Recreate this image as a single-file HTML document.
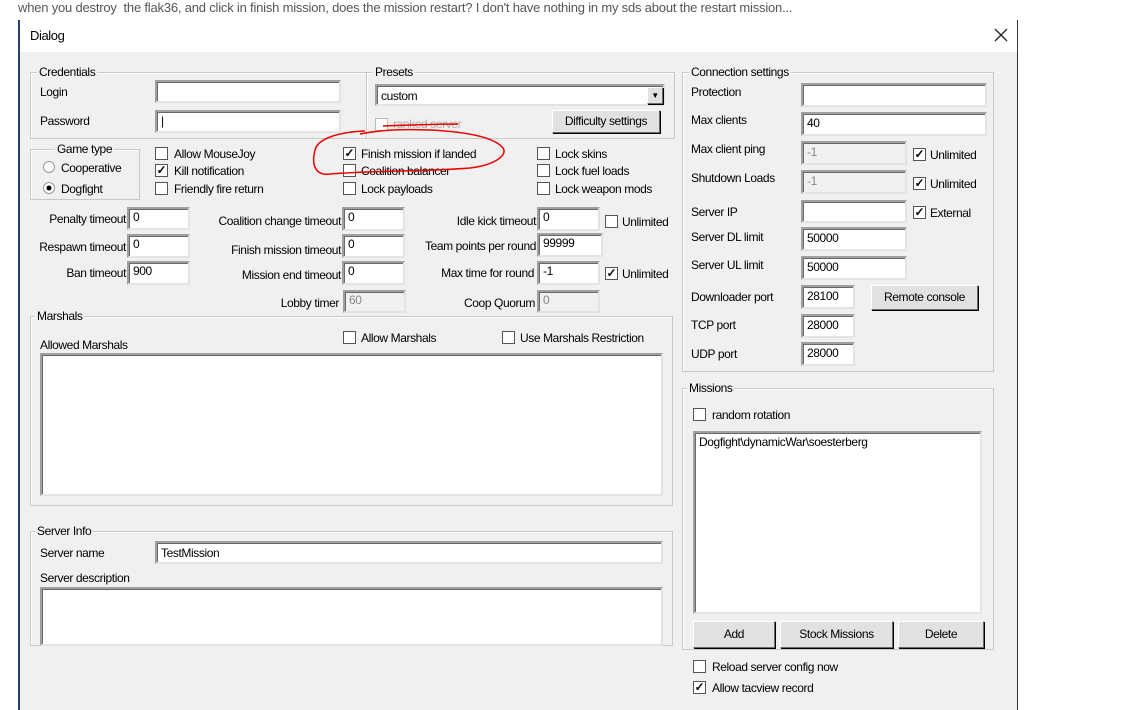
<!DOCTYPE html>
<html><head><meta charset="utf-8"><style>
*{box-sizing:border-box;margin:0;padding:0}
body{width:1122px;height:705px;background:#fff;position:relative;overflow:hidden;font-family:"Liberation Sans",sans-serif;font-size:12px;color:#000}
.a{position:absolute;white-space:nowrap;letter-spacing:-0.4px}
.dlg{position:absolute;left:18px;top:20px;width:1000px;height:690px;background:#f0f0f0;border-left:2px solid #2b3e6b;border-right:1px solid #333}
.title{position:absolute;left:0;top:0;width:100%;height:32px;background:#fff}
.in{position:absolute;background:#fff;border:2px solid;border-color:#a0a0a0 #e3e3e3 #e3e3e3 #a0a0a0;box-shadow:inset 1px 1px 0 #696969;padding:2px 4px;font-size:12px;letter-spacing:-0.4px}
.in.d{background:#f0f0f0;color:#888}
.g{position:absolute;border:1px solid #c8c8c8;box-shadow:1px 1px 0 #fff inset}
.g>span{position:absolute;top:-8px;left:6px;background:#f0f0f0;padding:0 2px;letter-spacing:-0.4px;white-space:nowrap}
.cb{position:absolute;width:13px;height:13px;background:#fff;border:1px solid #555;font-size:12px;line-height:11px;text-align:center;font-weight:bold}
.btn{position:absolute;background:#e1e1e1;border:1px solid;border-color:#fff #696969 #696969 #fff;box-shadow:1px 1px 0 #000;text-align:center;letter-spacing:-0.4px}
.r{position:absolute;width:12px;height:12px;border-radius:50%;background:#fff;border:1px solid #999}
</style></head><body>
<div class="a" style="left:18px;top:0px;font-size:13px;color:#555;letter-spacing:-0.2px">when you destroy &nbsp;the flak36, and click in finish mission, does the mission restart? I don't have nothing in my sds about the restart mission...</div>
<div class="dlg">
<div class="title"></div>
<div class="a" style="left:10px;top:8px;font-size:13px">Dialog</div>
<svg style="position:absolute;left:974px;top:8px" width="14" height="14"><path d="M1 1L13 13M13 1L1 13" stroke="#222" stroke-width="1.3"/></svg>
</div>

<div class="g" style="left:30px;top:72px;width:338px;height:67px"><span>Credentials</span></div>
<div class="a" style="left:40px;top:85px">Login</div>
<div class="in" style="left:155px;top:80px;width:186px;height:23px"></div>
<div class="a" style="left:40px;top:114px">Password</div>
<div class="in" style="left:155px;top:110px;width:186px;height:23px">|</div>

<div class="g" style="left:366px;top:72px;width:309px;height:67px"><span>Presets</span></div>
<div class="in" style="left:375px;top:84px;width:290px;height:22px;padding-top:3px">custom</div>
<div class="btn" style="left:647px;top:87px;width:16px;height:17px;font-size:8px;line-height:15px">▼</div>
<div class="cb" style="left:375px;top:118px;border-color:#bbb"></div>
<div class="a" style="left:393px;top:117px;color:#aaa">ranked server</div>
<div class="btn" style="left:552px;top:110px;width:108px;height:23px;line-height:21px">Difficulty settings</div>

<div class="g" style="left:682px;top:72px;width:312px;height:300px"><span>Connection settings</span></div>
<div class="a" style="left:691px;top:85px">Protection</div>
<div class="in" style="left:801px;top:83px;width:186px;height:24px"></div>
<div class="a" style="left:691px;top:113px">Max clients</div>
<div class="in" style="left:801px;top:112px;width:186px;height:24px">40</div>
<div class="a" style="left:691px;top:142px">Max client ping</div>
<div class="in d" style="left:801px;top:141px;width:106px;height:24px">-1</div>
<div class="a" style="left:691px;top:171px">Shutdown Loads</div>
<div class="in d" style="left:801px;top:170px;width:106px;height:24px">-1</div>
<div class="cb" style="left:913px;top:148px">✓</div><div class="a" style="left:930px;top:148px">Unlimited</div>
<div class="cb" style="left:913px;top:177px">✓</div><div class="a" style="left:930px;top:177px">Unlimited</div>
<div class="a" style="left:691px;top:205px">Server IP</div>
<div class="in" style="left:801px;top:200px;width:106px;height:23px"></div>
<div class="cb" style="left:913px;top:206px">✓</div><div class="a" style="left:930px;top:206px">External</div>
<div class="a" style="left:691px;top:230px">Server DL limit</div>
<div class="in" style="left:801px;top:227px;width:106px;height:24px">50000</div>
<div class="a" style="left:691px;top:258px">Server UL limit</div>
<div class="in" style="left:801px;top:256px;width:106px;height:24px">50000</div>
<div class="a" style="left:691px;top:290px">Downloader port</div>
<div class="in" style="left:801px;top:285px;width:54px;height:24px">28100</div>
<div class="btn" style="left:871px;top:285px;width:107px;height:25px;line-height:23px">Remote console</div>
<div class="a" style="left:691px;top:318px">TCP port</div>
<div class="in" style="left:801px;top:314px;width:54px;height:24px">28000</div>
<div class="a" style="left:691px;top:347px">UDP port</div>
<div class="in" style="left:801px;top:342px;width:54px;height:24px">28000</div>

<div class="g" style="left:30px;top:149px;width:110px;height:51px"><span style="left:24px">Game type</span></div>
<div class="r" style="left:43px;top:161px"></div><div class="a" style="left:61px;top:161px">Cooperative</div>
<div class="r" style="left:43px;top:182px;background:radial-gradient(#000 30%,#fff 40%)"></div><div class="a" style="left:61px;top:182px">Dogfight</div>

<div class="cb" style="left:155px;top:147px"></div><div class="a" style="left:174px;top:147px">Allow MouseJoy</div>
<div class="cb" style="left:155px;top:164px">✓</div><div class="a" style="left:174px;top:164px">Kill notification</div>
<div class="cb" style="left:155px;top:182px"></div><div class="a" style="left:174px;top:182px">Friendly fire return</div>
<div class="cb" style="left:343px;top:147px">✓</div><div class="a" style="left:361px;top:147px">Finish mission if landed</div>
<div class="cb" style="left:343px;top:164px"></div><div class="a" style="left:361px;top:164px">Coalition balancer</div>
<div class="cb" style="left:343px;top:182px"></div><div class="a" style="left:361px;top:182px">Lock payloads</div>
<div class="cb" style="left:537px;top:147px"></div><div class="a" style="left:555px;top:147px">Lock skins</div>
<div class="cb" style="left:537px;top:164px"></div><div class="a" style="left:555px;top:164px">Lock fuel loads</div>
<div class="cb" style="left:537px;top:182px"></div><div class="a" style="left:555px;top:182px">Lock weapon mods</div>

<div class="a" style="right:996px;top:212px">Penalty timeout</div>
<div class="in" style="left:127px;top:207px;width:63px;height:23px;padding-top:1px">0</div>
<div class="a" style="right:996px;top:240px">Respawn timeout</div>
<div class="in" style="left:127px;top:234px;width:63px;height:24px;padding-top:1px">0</div>
<div class="a" style="right:996px;top:266px">Ban timeout</div>
<div class="in" style="left:127px;top:261px;width:63px;height:24px;padding-top:1px">900</div>
<div class="a" style="right:781px;top:214px">Coalition change timeout</div>
<div class="in" style="left:342px;top:207px;width:63px;height:24px;padding-top:1px">0</div>
<div class="a" style="right:781px;top:243px">Finish mission timeout</div>
<div class="in" style="left:342px;top:234px;width:63px;height:24px;padding-top:1px">0</div>
<div class="a" style="right:781px;top:268px">Mission end timeout</div>
<div class="in" style="left:342px;top:261px;width:63px;height:24px;padding-top:1px">0</div>
<div class="a" style="right:783px;top:296px">Lobby timer</div>
<div class="in d" style="left:343px;top:290px;width:63px;height:23px;padding-top:1px">60</div>
<div class="a" style="right:586px;top:214px">Idle kick timeout</div>
<div class="in" style="left:537px;top:207px;width:63px;height:24px;padding-top:1px">0</div>
<div class="cb" style="left:605px;top:215px"></div><div class="a" style="left:622px;top:215px">Unlimited</div>
<div class="a" style="right:586px;top:239px">Team points per round</div>
<div class="in" style="left:537px;top:233px;width:66px;height:24px;padding-top:1px">99999</div>
<div class="a" style="right:588px;top:266px">Max time for round</div>
<div class="in" style="left:537px;top:261px;width:63px;height:24px;padding-top:1px">-1</div>
<div class="cb" style="left:605px;top:267px">✓</div><div class="a" style="left:622px;top:267px">Unlimited</div>
<div class="a" style="right:587px;top:296px">Coop Quorum</div>
<div class="in d" style="left:537px;top:290px;width:63px;height:23px;padding-top:1px">0</div>

<div class="g" style="left:30px;top:316px;width:643px;height:190px"><span style="left:4px">Marshals</span></div>
<div class="a" style="left:40px;top:338px">Allowed Marshals</div>
<div class="cb" style="left:343px;top:331px"></div><div class="a" style="left:361px;top:331px">Allow Marshals</div>
<div class="cb" style="left:502px;top:331px"></div><div class="a" style="left:520px;top:331px">Use Marshals Restriction</div>
<div class="in" style="left:40px;top:353px;width:623px;height:143px"></div>

<div class="g" style="left:30px;top:531px;width:643px;height:115px"><span style="left:4px">Server Info</span></div>
<div class="a" style="left:40px;top:546px">Server name</div>
<div class="in" style="left:155px;top:541px;width:508px;height:23px;padding-top:3px">TestMission</div>
<div class="a" style="left:40px;top:571px">Server description</div>
<div class="in" style="left:40px;top:587px;width:623px;height:59px"></div>

<div class="g" style="left:682px;top:388px;width:312px;height:262px"><span style="left:4px">Missions</span></div>
<div class="cb" style="left:693px;top:408px"></div><div class="a" style="left:712px;top:408px">random rotation</div>
<div class="in" style="left:693px;top:431px;width:289px;height:183px">Dogfight\dynamicWar\soesterberg</div>
<div class="btn" style="left:693px;top:621px;width:82px;height:27px;line-height:25px">Add</div>
<div class="btn" style="left:780px;top:621px;width:113px;height:27px;line-height:25px">Stock Missions</div>
<div class="btn" style="left:898px;top:621px;width:86px;height:27px;line-height:25px">Delete</div>
<div class="cb" style="left:693px;top:660px"></div><div class="a" style="left:712px;top:660px">Reload server config now</div>
<div class="cb" style="left:693px;top:681px">✓</div><div class="a" style="left:712px;top:681px">Allow tacview record</div>

<svg style="position:absolute;left:0;top:0" width="1122" height="705">
<path d="M365 131 C340 132 318 138 315 150 C311 166 316 176 330 174 C380 170 420 172 470 168 C495 165 508 155 503 148 C495 138 470 132 430 130 C400 129 380 130 360 134" fill="none" stroke="#e00" stroke-width="1.5"/>
<path d="M383 126 C410 125 435 124 458 124" fill="none" stroke="#e00" stroke-width="1.5"/>
</svg>
</body></html>
